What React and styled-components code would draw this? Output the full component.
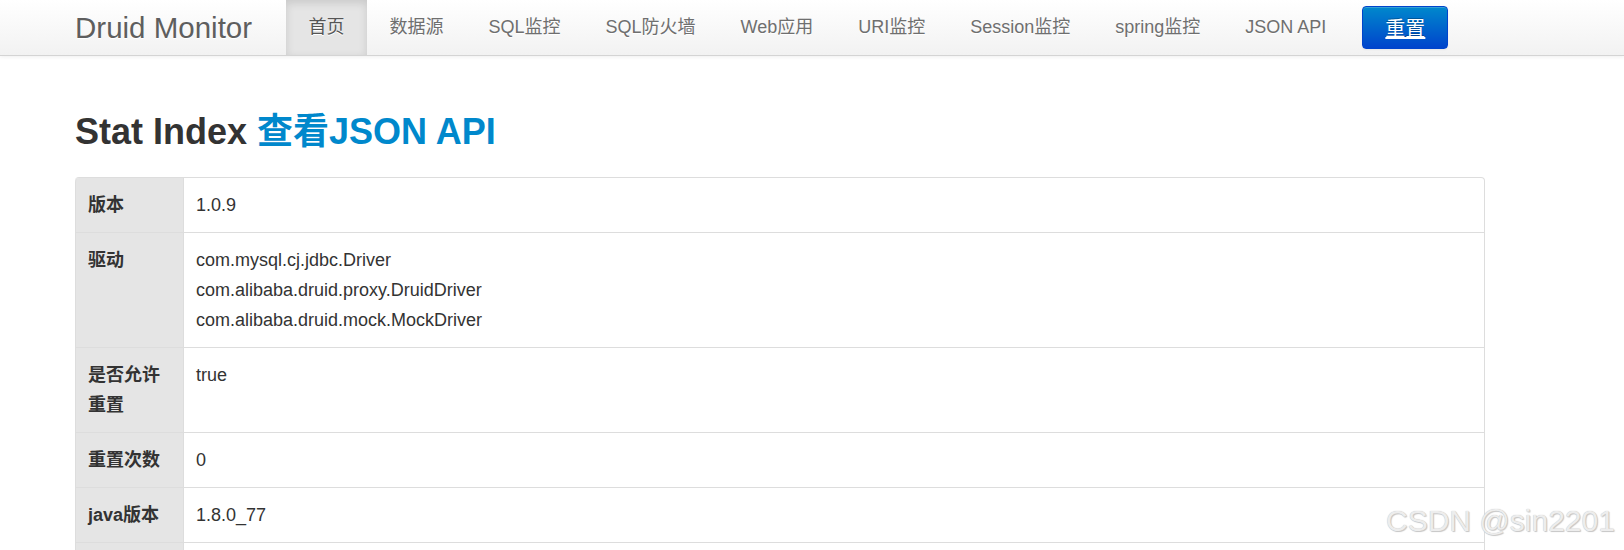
import React from 'react';
import styled, { createGlobalStyle } from 'styled-components';

const GlobalStyle = createGlobalStyle`
  html, body {
    margin: 0;
    padding: 0;
    background: #ffffff;
  }
  body {
    font-family: 'Liberation Sans', Arial, 'Noto Sans CJK SC', sans-serif;
    color: #333333;
  }
`;

const Page = styled.div`
  position: relative;
  min-height: 550px;
`;

const Navbar = styled.div`
  height: 55px;
  background: linear-gradient(to bottom, #ffffff, #f2f2f2);
  border-bottom: 1px solid #d4d4d4;
  box-shadow: 0 1px 4px rgba(0, 0, 0, 0.065);
  display: flex;
  align-items: stretch;
  padding-left: 75px;
`;

const Brand = styled.a`
  width: 211px;
  display: flex;
  align-items: center;
  font-size: 29.5px;
  color: #5e5e5e;
  text-decoration: none;
  text-shadow: 0 1px 0 #ffffff;
`;

const NavList = styled.ul`
  display: flex;
  list-style: none;
  margin: 0;
  padding: 0;
`;

const NavLink = styled.a`
  display: block;
  padding: 0 22.5px;
  line-height: 55px;
  font-size: 18px;
  text-decoration: none;
  color: ${(p) => (p.$active ? '#555555' : '#6f6f6f')};
  background: ${(p) => (p.$active ? '#e5e5e5' : 'transparent')};
  box-shadow: ${(p) => (p.$active ? 'inset 0 3px 8px rgba(0, 0, 0, 0.125)' : 'none')};
  text-shadow: 0 1px 0 #ffffff;
`;

const ResetButton = styled.a`
  align-self: flex-start;
  margin: 6px 0 0 13.5px;
  width: 86px;
  height: 43px;
  box-sizing: border-box;
  display: flex;
  align-items: center;
  justify-content: center;
  font-size: 20px;
  color: #ffffff;
  text-decoration: underline;
  text-shadow: 0 -1px 0 rgba(0, 0, 0, 0.25);
  background: linear-gradient(to bottom, #0088cc, #0044cc);
  border: 1px solid #0044cc;
  border-radius: 4px;
  box-shadow: inset 0 1px 0 rgba(255, 255, 255, 0.2), 0 1px 2px rgba(0, 0, 0, 0.05);
`;

const Content = styled.div`
  padding: 56px 0 0 75px;
`;

const Title = styled.h1`
  margin: 0 0 25px;
  font-size: 36px;
  line-height: 40px;
  font-weight: bold;
  color: #333333;

  a {
    color: #0088cc;
    text-decoration: none;
  }
`;

const StatTable = styled.table`
  width: 1410px;
  border-collapse: separate;
  border-spacing: 0;
  border: 1px solid #dddddd;
  border-left: 0;
  border-radius: 4px;
  font-size: 18px;
  line-height: 30px;

  tr:first-child > * {
    border-top: 0;
  }
  tr:first-child > th {
    border-top-left-radius: 4px;
  }
  tr:first-child > td {
    border-top-right-radius: 4px;
  }
`;

const Label = styled.th`
  width: 83px;
  padding: 12px;
  text-align: left;
  vertical-align: top;
  font-weight: bold;
  background: #e5e5e5;
  border-left: 1px solid #dddddd;
  border-top: 1px solid #dddddd;
`;

const Value = styled.td`
  padding: 12px;
  vertical-align: top;
  border-left: 1px solid #dddddd;
  border-top: 1px solid #dddddd;
`;

const Watermark = styled.div`
  position: absolute;
  left: 1386px;
  top: 506px;
  font-size: 30px;
  line-height: 30px;
  color: #ededed;
  text-shadow: 0 0 1px #b5b5b5, 1px 1px 1px #c8c8c8;
  white-space: nowrap;
  pointer-events: none;
`;

const navItems = ['首页', '数据源', 'SQL监控', 'SQL防火墙', 'Web应用', 'URI监控', 'Session监控', 'spring监控', 'JSON API'];

const rows = [
  { label: '版本', values: ['1.0.9'] },
  {
    label: '驱动',
    values: ['com.mysql.cj.jdbc.Driver', 'com.alibaba.druid.proxy.DruidDriver', 'com.alibaba.druid.mock.MockDriver'],
  },
  { label: '是否允许重置', values: ['true'] },
  { label: '重置次数', values: ['0'] },
  { label: 'java版本', values: ['1.8.0_77'] },
  { label: '', values: [''] },
];

const App = () => {
  return (
    <Page>
      <GlobalStyle />
      <Navbar>
        <Brand href="#">Druid Monitor</Brand>
        <NavList>
          {navItems.map((item, i) => (
            <li key={item}>
              <NavLink href="#" $active={i === 0}>{item}</NavLink>
            </li>
          ))}
        </NavList>
        <ResetButton href="#">重置</ResetButton>
      </Navbar>

      <Content>
        <Title>
          Stat Index <a href="#">查看JSON API</a>
        </Title>
        <StatTable>
          <tbody>
            {rows.map((row, i) => (
              <tr key={i}>
                <Label>{row.label || '\u00a0'}</Label>
                <Value>
                  {row.values.map((v, j) => (
                    <div key={j}>{v || '\u00a0'}</div>
                  ))}
                </Value>
              </tr>
            ))}
          </tbody>
        </StatTable>
      </Content>

      <Watermark>CSDN @sin2201</Watermark>
    </Page>
  );
};

export default App;
